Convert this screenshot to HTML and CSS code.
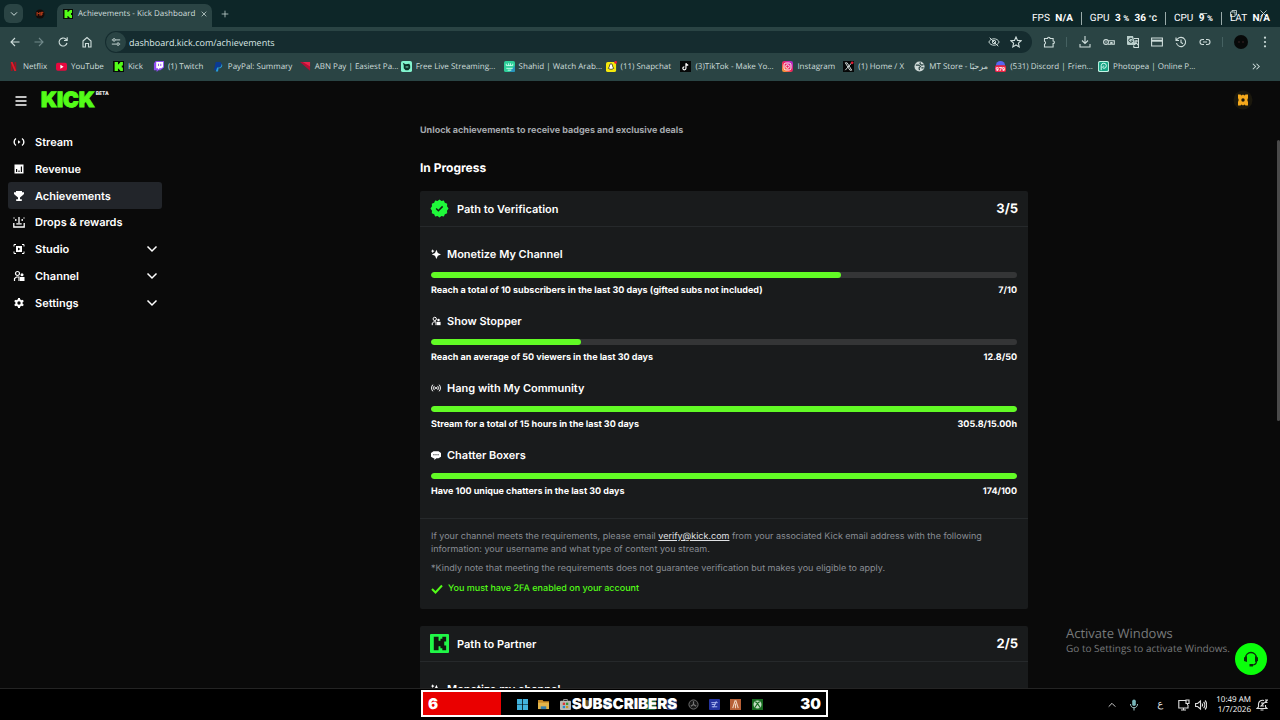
FILE: index.html
```html
<!DOCTYPE html>
<html lang="en">
<head>
<meta charset="utf-8">
<title>Achievements - Kick Dashboard</title>
<link rel="stylesheet" href="styles.css">
</head>
<body>
<svg class="defs" aria-hidden="true">
  <symbol id="kick" viewBox="0 0 20 20"><rect width="20" height="20" fill="#080b08"/><path fill="#53fc18" d="M3 2h6v4h2V4h2V2h5v6h-2v4h2v6h-5v-2h-2v-2H9v4H3z"/></symbol>
  <symbol id="chev" viewBox="0 0 12 12"><path d="M1.500 3.500 6 8l4.500-4.500" fill="none" stroke="currentColor" stroke-width="1.500"/></symbol>
  <symbol id="users" viewBox="0 0 12 12"><circle cx="4.500" cy="3.500" r="2" fill="none" stroke="currentColor" stroke-width="1.200"/><path d="M1.500 11V8.500L3.500 7H6v4" fill="none" stroke="currentColor" stroke-width="1.200"/><circle cx="9" cy="4.700" r="1.500" fill="currentColor"/><path d="M7 7h4.500v4H7z" fill="currentColor"/></symbol>
  <symbol id="spark" viewBox="0 0 12 12"><path fill="currentColor" d="M6.500 1 8.200 4.800 12 6.500 8.200 8.200 6.500 12 4.800 8.200 1 6.500l3.800-1.700zM2 .2l.8 1.500 1.500.8-1.500.8L2 4.800l-.8-1.500L0 2.500l1.200-.8z"/></symbol>
</svg>

<header class="browser">
  <div class="tabs">
    <button class="tab-search" aria-label="Search tabs"><svg viewBox="0 0 12 12"><use href="#chev"/></svg></button>
    <span class="pinned"><svg viewBox="0 0 12 12"><circle cx="6" cy="6" r="5.500" fill="#160b08"/><path d="M2.500 8V4l2 2 1.500-2v4M7.500 8V4H10M7.500 6h2" fill="none" stroke="#c4421c" stroke-width="1.200"/></svg></span>
    <div class="tab"><svg><use href="#kick"/></svg><span>Achievements - Kick Dashboard</span>
      <button aria-label="Close tab"><svg viewBox="0 0 12 12"><path class="ln" d="m2.500 2.500 7 7m0-7-7 7"/></svg></button></div>
    <button class="newtab" aria-label="New tab"><svg viewBox="0 0 12 12"><path class="ln" d="M6 1v10M1 6h10"/></svg></button>
    <div class="winctl" aria-hidden="true"><svg viewBox="0 0 12 12"><path class="ln" d="M1 6h10"/></svg><svg viewBox="0 0 12 12"><path class="ln" d="M2 4h6v6H2zM4 4V2h6v6H8"/></svg><svg viewBox="0 0 12 12"><path class="ln" d="m2 2 8 8m0-8-8 8"/></svg></div>
  </div>
  <div class="stats"><span>FPS <b>N/A</b></span><span>GPU <b>3 <small>%</small></b> <b>36 <small>°C</small></b></span><span>CPU <b>9 <small>%</small></b></span><span>LAT <b>N/A</b></span></div>

  <div class="toolbar">
    <button aria-label="Back"><svg viewBox="0 0 12 12"><path class="ln" d="M10.500 6H2m4-4L2 6l4 4"/></svg></button>
    <button class="dim" aria-label="Forward"><svg viewBox="0 0 12 12"><path class="ln" d="M1.500 6H10M6 2l4 4-4 4"/></svg></button>
    <button aria-label="Reload"><svg viewBox="0 0 12 12"><path class="ln" d="M10 7A4 4 0 1 1 8.700 3l1.300 1.300M10.200 1.300v3.200H7"/></svg></button>
    <button aria-label="Home"><svg viewBox="0 0 12 12"><path class="ln" d="M2 5 6 1.500 10 5v6H7.500V7.500h-3V11H2z"/></svg></button>
    <div class="address">
      <button class="site" aria-label="Site information"><svg viewBox="0 0 12 12"><path class="ln" d="M1 3.500h1M5.500 3.500H11M1 8.500h5.500M10.500 8.500h.5"/><circle class="ln" cx="3.700" cy="3.500" r="1.500"/><circle class="ln" cx="8.500" cy="8.500" r="1.500"/></svg></button>
      <input type="text" value="dashboard.kick.com/achievements" aria-label="Address">
      <button aria-label="Tracking blocked"><svg viewBox="0 0 14 12"><path class="ln" d="M1 6c2-5 10-5 12 0-2 5-10 5-12 0zM2 1l10 10"/><circle class="ln" cx="7" cy="6" r="2"/></svg></button>
      <button aria-label="Bookmark"><svg viewBox="0 0 12 12"><path class="ln" d="m6 1 1.500 3.400 3.700.3-2.800 2.500.8 3.700L6 9l-3.200 1.900.8-3.700L.8 4.700l3.700-.3z"/></svg></button>
    </div>
    <button aria-label="Extensions"><svg viewBox="0 0 12 12"><path class="ln" d="M1.500 2.500h3a1.300 1.300 0 0 1 2.600 0h3V5a1.300 1.300 0 0 1 0 2.600V11h-8.600V8.300a1.600 1.600 0 0 0 0-3z"/></svg></button>
    <i></i>
    <button aria-label="Downloads"><svg viewBox="0 0 12 12"><path class="ln" d="M6 0v7M3 4.500l3 3 3-3M1 8v3h10V8"/></svg></button>
    <button aria-label="Passwords"><svg viewBox="0 0 12 12"><circle class="ln" cx="3" cy="6" r="2.400"/><circle cx="3" cy="6" r=".8" fill="currentColor"/><path class="ln" d="M5.300 4.700h6v3.500H9V6.500H7.800v1.700H5"/></svg></button>
    <button aria-label="Translate"><svg viewBox="0 0 12 12"><path fill="#b9cecb" d="M0 0h6l2.500 9H1a1 1 0 0 1-1-1z"/><path d="M5.500 3.200A2 2 0 1 0 5.700 5H4" fill="none" stroke="#2a4444"/><path class="ln" d="M7 2.500h4.500v9H7l-.5-2M7.500 5h3.500M9.200 4v1c0 2-1 3-2 3.700M8.500 6l2.500 3"/></svg></button>
    <button aria-label="Payment"><svg viewBox="0 0 12 12"><path class="ln" d="M.6 2h10.800v8H.6z"/><path d="M.6 3.700h10.800v2H.6z" fill="currentColor"/></svg></button>
    <button aria-label="History"><svg viewBox="0 0 12 12"><path class="ln" d="M1.500 7a4.600 4.600 0 1 0 1-4L1 4.500M1 1.500v3h3M6 3.500v3l2 1.300"/></svg></button>
    <button aria-label="Copy link"><svg viewBox="0 0 12 12"><path class="ln" d="M5 3.500H3.500a2.500 2.500 0 0 0 0 5H5M7 3.500h1.500a2.500 2.500 0 0 1 0 5H7M4 6h4"/></svg></button>
    <i></i>
    <button aria-label="Profile"><svg class="big" viewBox="0 0 14 14"><circle cx="7" cy="7" r="7" fill="#070909"/><path d="M4 7h2m2 0h2" stroke="#3b2426"/></svg></button>
    <button aria-label="Menu"><svg viewBox="0 0 12 12" fill="currentColor"><circle cx="6" cy="1.700" r="1.100"/><circle cx="6" cy="6" r="1.100"/><circle cx="6" cy="10.300" r="1.100"/></svg></button>
  </div>

  <nav class="bookmarks" aria-label="Bookmarks">
    <a href="#"><svg viewBox="0 0 12 12"><path fill="#9d1420" d="M3 1h2l2 5V1h2v10H7L5 6v5H3z"/><path fill="#e01b2b" d="M3 1h2l4 10H7z"/></svg>Netflix</a>
    <a href="#"><svg viewBox="0 0 12 12"><rect y="2" width="12" height="8.500" rx="2" fill="#e8083e"/><path fill="#fff" d="m4.800 4 3.500 2.200-3.500 2.200z"/></svg>YouTube</a>
    <a href="#"><svg><use href="#kick"/></svg>Kick</a>
    <a href="#"><svg viewBox="0 0 12 12"><path fill="#8e4df0" d="M1 2.500 3 0h9v7l-4 3H6l-2 2v-2H1z"/><path fill="#fff" d="M3.500 1H11v5.500L9 8H7L5.500 9.500V8h-2z"/><path d="M6 3v2.500M8.500 3v2.500" stroke="#8e4df0"/></svg>(1) Twitch</a>
    <a href="#"><svg viewBox="0 0 12 12"><path fill="#0a3a94" d="M3 1h4.500C10 1 10 6 6.500 6.500H5L4 10H1z"/><path fill="#259be0" d="M9.500 3c1.500 2 0 5-2.500 5H6l-.5 3.500H3L4.500 7H7c1.500-.5 2.500-2 2.500-4z"/></svg>PayPal: Summary</a>
    <a href="#"><svg viewBox="0 0 12 12"><path fill="#b30f35" d="M0 1h11v9.500z"/><path fill="#e5234b" d="m3 1 8 5V1z"/></svg>ABN Pay | Easiest Pa...</a>
    <a href="#"><svg viewBox="0 0 12 12"><rect width="12" height="12" rx="2" fill="#82f4ce"/><path fill="#0c3329" d="m2 2 3 1.500 4-.5 1 2v3L8 10H5L3 8V5z"/><path fill="#82f4ce" d="M5 6h3v1H5z"/></svg>Free Live Streaming...</a>
    <a href="#"><svg viewBox="0 0 12 12"><rect width="12" height="12" rx="2" fill="#2dce99"/><path fill="#2793bd" d="M6 12h4a2 2 0 0 0 2-2V5z"/><path d="M2.500 3v2h7V3M5 2.500V5m2-2.500V5M2.500 8h7M4 10h4" stroke="#c9fff0" fill="none"/></svg>Shahid | Watch Arab...</a>
    <a href="#"><svg viewBox="0 0 12 12"><rect y="1" width="11" height="11" rx="2" fill="#f5e90c"/><path d="M5.500 3C3.500 3 4 5.500 3.500 6.500L2.500 8l2 1h2l2-1-1-1.500C7 5.500 7.500 3 5.500 3z" fill="#fff" stroke="#26260c" stroke-width=".8"/><circle cx="10.500" cy="1.500" r="1.500" fill="#ee1d37"/></svg>(11) Snapchat</a>
    <a href="#"><svg viewBox="0 0 12 12"><rect width="12" height="12" fill="#060808"/><path d="M6.500 2.500V8a1.700 1.700 0 1 1-1.700-1.700M6.500 2.500C7 4 8 4.500 9 4.500" stroke="#fff" stroke-width="1.300" fill="none"/></svg>(3)TikTok - Make Yo...</a>
    <a href="#"><svg viewBox="0 0 12 12"><defs><linearGradient id="ig" x1="0" y1="1" x2="1" y2="0"><stop stop-color="#ffb52c"/><stop offset=".5" stop-color="#f0205f"/><stop offset="1" stop-color="#a42be8"/></linearGradient></defs><rect width="12" height="12" rx="2.500" fill="url(#ig)"/><rect x="2.200" y="2.200" width="7.600" height="7.600" rx="2" fill="none" stroke="#fff"/><circle cx="6" cy="6" r="1.900" fill="none" stroke="#fff"/></svg>Instagram</a>
    <a href="#"><svg viewBox="0 0 12 12"><rect width="12" height="12" fill="#060808"/><path d="m2.500 2 5 8h2l-5-8zM9.500 2l-7 8" fill="none" stroke="#dce4e2"/><circle cx="10" cy="2" r="1.500" fill="#d81b32"/></svg>(1) Home / X</a>
    <a href="#"><svg viewBox="0 0 12 12"><circle cx="6" cy="6" r="5.500" fill="#cfdad8"/><path d="M2 4.500h3L7 6 5.500 7.500 6 10M7 1.500 6.500 3 8.500 4.500l2-.5M8 7.500h2.500" stroke="#2a4444" stroke-width="1.300" fill="none"/></svg>MT Store - مرحبًا</a>
    <a href="#"><svg viewBox="0 0 12 12"><path fill="#5865f2" d="M1 5a5 5 0 0 1 10 0z"/><rect y="4.500" width="12" height="7.500" rx="2" fill="#ed2345"/><text x="6" y="10.500" class="badge">979</text></svg>(531) Discord | Frien...</a>
    <a href="#"><svg viewBox="0 0 12 12"><rect width="12" height="12" rx="2" fill="#c4f5e6"/><rect x="1" y="1" width="10" height="10" rx="1.500" fill="#18a385"/><path d="M3.500 10V5a2.800 2.800 0 1 1 3 3C4.500 8 5 5 6.800 5.500" fill="none" stroke="#e6fff8"/></svg>Photopea | Online P...</a>
    <button aria-label="More bookmarks"><svg viewBox="0 0 12 12"><path class="ln" d="m2 3 3 3-3 3m4-6 3 3-3 3"/></svg></button>
  </nav>
</header>

<div class="app">
  <aside>
    <div class="brand">
      <button aria-label="Toggle menu"><svg viewBox="0 0 12 12"><path d="M.5 2h11M.5 6h11M.5 10h11" stroke="#fff" stroke-width="1.300"/></svg></button>
      <span class="logo">KICK</span><sup>BETA</sup>
    </div>
    <nav class="side" aria-label="Dashboard">
      <a href="#"><svg viewBox="0 0 12 12"><path d="M3 2.500C.5 4 .5 8 3 9.500M9 2.500c2.500 1.500 2.500 5.500 0 7" fill="none" stroke="currentColor" stroke-width="1.400"/><path d="m5 4.300 2.500 1.700L5 7.700z" fill="currentColor"/></svg>Stream</a>
      <a href="#"><svg viewBox="0 0 12 12"><path fill="currentColor" fill-rule="evenodd" d="M1.500 1.500h9v9h-9zM3 6v3h1.200V6zm2.400 1.500V9h1.200V7.500zM7.800 3.500V9H9V3.500z"/></svg>Revenue</a>
      <a href="#" class="active"><svg viewBox="0 0 12 12"><path fill="currentColor" d="M3 1h6v1.200h2V4L9.400 5.600 7 7.500v1.700h1.800V11H3.200V9.200H5V7.500L2.600 5.600 1 4V2.200h2z"/></svg>Achievements</a>
      <a href="#"><svg viewBox="0 0 12 12"><path d="M.8 7v4h10.400V7M3.300 7.800h5.400M6 1v6M2.800 3v2M9.200 3v2M1 1.500v1M11 1.500v1" fill="none" stroke="currentColor" stroke-width="1.300"/></svg>Drops &amp; rewards</a>
      <a href="#"><svg viewBox="0 0 12 12"><path fill="currentColor" fill-rule="evenodd" d="M3 3h6v6H3zM5 4.500v3L7.500 6z"/><path d="M1 3.500V1.500h2M9 1.500h2v2M1 8.500v2h2M9 10.500h2v-2" fill="none" stroke="currentColor"/></svg>Studio<svg class="arrow"><use href="#chev"/></svg></a>
      <a href="#"><svg><use href="#users"/></svg>Channel<svg class="arrow"><use href="#chev"/></svg></a>
      <a href="#"><svg viewBox="0 0 12 12"><circle cx="6" cy="6" r="2.700" fill="none" stroke="currentColor" stroke-width="2"/><path d="M6 1v2M6 9v2M1.700 3.500l1.500 1M8.800 7.500l1.500 1M1.700 8.500l1.500-1M8.800 4.500l1.500-1" stroke="currentColor" stroke-width="2"/></svg>Settings<svg class="arrow"><use href="#chev"/></svg></a>
    </nav>
  </aside>

  <main>
    <p class="lead">Unlock achievements to receive badges and exclusive deals</p>
    <h1>In Progress</h1>
    <section class="card">
      <div class="head"><svg viewBox="0 0 20 20"><path d="m10 .5 2 1.700 2.600-.6 1 2.400 2.500.9-.2 2.700L19.500 10l-1.600 2.300.2 2.700-2.500 1-1 2.400-2.600-.6-2 1.700-2-1.700-2.600.6-1-2.400-2.500-1 .2-2.700L.5 10l1.600-2.400-.2-2.700 2.500-.9 1-2.400 2.600.6z" fill="#1ff93a"/><path d="m6.500 10 2.300 2.300 4.500-4.500" fill="none" stroke="#122014" stroke-width="1.600"/></svg><h2>Path to Verification</h2><strong>3/5</strong></div>
      <div class="goals">
        <article><h3><svg><use href="#spark"/></svg>Monetize My Channel</h3><div class="bar"><span style="width:70%"></span></div><p><span>Reach a total of 10 subscribers in the last 30 days (gifted subs not included)</span><span>7/10</span></p></article>
        <article><h3><svg><use href="#users"/></svg>Show Stopper</h3><div class="bar"><span style="width:25.6%"></span></div><p><span>Reach an average of 50 viewers in the last 30 days</span><span>12.8/50</span></p></article>
        <article><h3><svg viewBox="0 0 12 12"><path d="M2.200 2c-2 2-2 6 0 8M9.800 2c2 2 2 6 0 8M4 3.500c-1 1.500-1 3.500 0 5M8 3.500c1 1.500 1 3.500 0 5" fill="none" stroke="currentColor" stroke-width="1.200"/><circle cx="6" cy="6" r="1.200" fill="currentColor"/></svg>Hang with My Community</h3><div class="bar"><span style="width:100%"></span></div><p><span>Stream for a total of 15 hours in the last 30 days</span><span>305.8/15.00h</span></p></article>
        <article><h3><svg viewBox="0 0 12 12"><path fill="currentColor" d="M3 1.500h6l3 2v4.500L9 10H6.500L4 12v-2H3L0 8V3.500z"/><path d="M2.800 5.700h1.400m1.100 0h1.400m1.100 0h1.400" stroke="#191b1c" stroke-width="1.200"/></svg>Chatter Boxers</h3><div class="bar"><span style="width:100%"></span></div><p><span>Have 100 unique chatters in the last 30 days</span><span>174/100</span></p></article>
      </div>
      <div class="notes">
        <p>If your channel meets the requirements, please email <a href="#">verify@kick.com</a> from your associated Kick email address with the following information: your username and what type of content you stream.</p>
        <p>*Kindly note that meeting the requirements does not guarantee verification but makes you eligible to apply.</p>
        <p class="ok"><svg viewBox="0 0 12 12"><path d="m1 6 3.500 3.500 6.500-7" fill="none" stroke="currentColor" stroke-width="2"/></svg>You must have 2FA enabled on your account</p>
      </div>
    </section>
    <section class="card">
      <div class="head"><svg viewBox="0 0 20 20"><rect width="20" height="20" rx="1" fill="#20f747"/><path fill="#10180f" d="M4 3h5v4h2V5h2V3h4v5h-2v4h2v5h-4v-2h-2v-2H9v4H4z"/></svg><h2>Path to Partner</h2><strong>2/5</strong></div>
      <div class="goals"><article><h3><svg><use href="#spark"/></svg>Monetize my channel</h3></article></div>
    </section>
  </main>
  <button class="account" aria-label="Account"><svg viewBox="0 0 20 20"><circle cx="10" cy="10" r="9.500" fill="#1b180d"/><path d="M5 4.500h2.500L8.500 5.500 10 4.500l1.500 1 1-1H15V8l-.7 2 .7 2v3.500h-2.500l-1-1-1.500 1-1.500-1-1 1H5V12l.7-2L5 8z" fill="#f5a91c"/><circle cx="10" cy="10" r="1.700" fill="#1b180d"/></svg></button>
  <div class="thumb"></div>
  <div class="activate"><b>Activate Windows</b>Go to Settings to activate Windows.</div>
  <button class="help" aria-label="Support"><svg viewBox="0 0 16 16"><path d="M2.500 8.500V7a5.500 5.500 0 0 1 11 0v3c0 2.500-2 4-4.500 4" fill="none" stroke="#0a2a0a" stroke-width="1.300"/><path fill="#0a2a0a" d="M1 6.500 4 5v6l-3-1zM15 6.500 12 5v6l3-1zM6.500 13H10v2.500H6.500z"/></svg></button>
</div>

<footer class="taskbar">
  <div class="pins">
    <svg viewBox="0 0 12 12" fill="#42b4df"><path d="M0 0h5.600v5.600H0zM6.400 0H12v5.600H6.400zM0 6.400h5.600V12H0zM6.400 6.400H12V12H6.400z"/></svg>
    <svg viewBox="0 0 12 12"><path d="M0 1h5l1 1.500h6V11H0z" fill="#c98b26"/><path d="M0 4h12v7H0z" fill="#e4b54b"/><path d="M3 8h6v3H3z" fill="#367fae"/></svg>
    <svg viewBox="0 0 12 12"><path d="M4 2V.5h4V2" fill="none" stroke="#aaa"/><rect y="2" width="12" height="10" rx="1" fill="#b9b9b4"/><path d="M3 4h2.500v2.500H3z" fill="#d33"/><path d="M6.500 4H9v2.500H6.500z" fill="#393"/><path d="M3 7.500h2.500V10H3z" fill="#28c"/><path d="M6.500 7.500H9V10H6.500z" fill="#c92"/></svg>
    <svg viewBox="0 0 12 12"><circle cx="6" cy="6" r="5" fill="#665124"/></svg>
    <svg viewBox="0 0 12 12"><circle cx="6" cy="6" r="5" fill="#244466"/></svg>
    <svg viewBox="0 0 12 12"><circle cx="6" cy="6" r="5" fill="#333"/></svg>
    <svg viewBox="0 0 12 12"><rect width="12" height="12" rx="2" fill="#1d5e31"/></svg>
    <svg viewBox="0 0 12 12"><rect width="12" height="12" rx="2" fill="#222f66"/></svg>
    <svg viewBox="0 0 12 12"><circle cx="6" cy="6" r="5" fill="#181818" stroke="#777"/><path d="M6 6V2.500M6 6 3 8M6 6l3 2" stroke="#777" stroke-width="1.300"/></svg>
    <svg viewBox="0 0 12 12"><rect width="12" height="12" rx="1" fill="#2433a0"/><path d="M2.500 4h7M3 6h4M3 8.500h6M8 2.500 5 9" stroke="#b4c1f5"/></svg>
    <svg viewBox="0 0 12 12"><rect width="12" height="12" fill="#b75f36"/><path d="m3 10 2.500-8h1L9 10M6 5v5" stroke="#f1d4bf" stroke-width="1.200" fill="none"/></svg>
    <svg viewBox="0 0 12 12"><rect width="12" height="12" fill="#176a20"/><circle cx="6" cy="6" r="4.300" fill="#c2dfc1"/><path d="M3 3c2 0 3 2 3 2s1-2 3-2M3 9.500 6 5l3 4.500" stroke="#176a20" stroke-width="1.200" fill="none"/></svg>
  </div>
  <div class="tray">
    <svg class="t1" viewBox="0 0 12 12"><path class="ln" d="m2 8 4-4 4 4"/></svg>
    <svg class="mic" viewBox="0 0 12 12"><rect x="4.200" y=".5" width="3.600" height="6.500" rx="1.800" fill="#79b7ba"/><path d="M2.500 5c0 5 7 5 7 0M6 9v2.500" fill="none" stroke="#a6c9ca"/></svg>
    <span class="lang">ع</span>
    <svg viewBox="0 0 12 12"><path class="ln" d="M8 1.500H.8v7.500H10V6M3 11h5M5.500 9v2"/><path class="ln" d="M8 1h3v3.500H8zM9.500 4.500V6"/></svg>
    <svg viewBox="0 0 12 12"><path class="ln" d="M.6 4.500h2L5.500 2v8L2.600 7.500h-2zM7 4.500c.8 1 .8 2 0 3M8.600 3c1.700 1.500 1.700 4.500 0 6M10 1.500c2.300 2 2.300 7 0 9"/></svg>
    <time>10:49 AM<br>1/7/2026</time>
    <svg viewBox="0 0 12 12"><path class="ln" d="M8 1.500C5 .5 2.500 2.500 2.500 5v3L1 9.500h10L9.500 8V6M4.500 11h3M5 4h3L5 7h3M9 1h2.500L9 3.500h2.500"/></svg>
  </div>
  <div class="subs"><span class="count">6</span><b>SUBSCRIBERS</b><span class="goal">30</span></div>
</footer>
</body>
</html>
```
FILE: styles.css
```css
* { box-sizing: border-box; margin: 0; padding: 0; }
body { height: 100vh; display: flex; flex-direction: column; overflow: hidden; background: #0a0a0a; color: #fff; font-family: Inter, "Liberation Sans", sans-serif; font-size: 9px; text-rendering: geometricPrecision; }
button { background: none; border: 0; color: inherit; font: inherit; display: grid; place-items: center; }
a { color: inherit; text-decoration: none; }
svg { width: 12px; height: 12px; flex: none; display: block; }
.defs { position: absolute; width: 0; height: 0; }
.ln { fill: none; stroke: currentColor; stroke-width: 1.1; }

.browser { flex: none; position: relative; background: #2a4444; color: #cfdedc; font-family: "Open Sans", "Noto Sans", sans-serif; }
.tabs { height: 27px; background: #0d2628; display: flex; align-items: center; padding-left: 4px; }
.tab-search { width: 19px; height: 19px; border-radius: 6px; background: #2a4444; }
.tab-search svg { width: 8px; height: 8px; }
.pinned { width: 34px; display: grid; place-items: center; }
.pinned svg { width: 10px; height: 10px; }
.tab { width: 155px; height: 23px; align-self: flex-end; display: flex; align-items: center; gap: 5px; padding: 0 6px; border-radius: 7px 7px 0 0; background: #2a4444; font-size: 8px; line-height: 12px; padding-bottom: 4px; white-space: nowrap; }
.tab > svg { width: 10px; height: 10px; }
.tab span { flex: 1; }
.tab button svg { width: 8px; height: 8px; }
.newtab { width: 26px; height: 20px; }
.newtab svg { width: 8px; height: 8px; }
.winctl { margin-left: auto; display: flex; gap: 21px; padding: 0 12px 0 0; }
.winctl svg { width: 9px; height: 9px; }
.stats { position: absolute; top: 12px; right: 10px; display: flex; font: 10px/13px Roboto, sans-serif; color: #fff; white-space: nowrap; }
.stats span + span { border-left: 1px solid #9aabaa; margin-left: 8px; padding-left: 8px; }
.stats b { margin-left: 3px; }
.stats small { font-size: 8px; }

.toolbar { height: 30px; display: flex; align-items: center; padding: 0 3px; }
.toolbar > button { width: 24px; height: 24px; flex: none; }
.toolbar .dim { color: #71898a; }
.toolbar .big { width: 14px; height: 14px; }
.toolbar > i { width: 1px; height: 10px; margin: 0 6px 0 5px; background: #456161; }
.address { flex: 1; height: 22px; margin: 0 5px 0 6px; padding: 0 5px 0 1px; display: flex; align-items: center; border-radius: 11px; background: #152c2f; }
.address button { width: 22px; height: 20px; }
.address .site { width: 20px; border-radius: 50%; background: #2a4444; }
.address .site svg { width: 10px; height: 10px; }
.address input { flex: 1; min-width: 0; margin-left: 3px; border: 0; background: none; color: #dbe8e6; font: 9px "Open Sans", sans-serif; text-rendering: geometricPrecision; }

.bookmarks { height: 24px; padding: 0 18px 5px 8px; display: grid; align-items: center; grid-template-columns: minmax(0,48fr) minmax(0,57fr) minmax(0,40fr) minmax(0,60fr) minmax(0,87fr) minmax(0,101fr) minmax(0,103fr) minmax(0,102fr) minmax(0,75fr) minmax(0,102fr) minmax(0,61fr) minmax(0,71fr) minmax(0,81fr) minmax(0,103fr) minmax(0,152fr) 12px; }
.bookmarks a { display: flex; align-items: center; gap: 4px; font-size: 8px; white-space: nowrap; }
.bookmarks svg { width: 11px; height: 11px; }
.badge { font: 700 6px Roboto, sans-serif; fill: #fff; text-anchor: middle; }

.app { flex: 1; min-height: 0; position: relative; display: flex; overflow: hidden; font-weight: 700; }
aside { flex: none; width: 170px; padding: 9px 8px; }
.brand { display: flex; align-items: center; height: 22px; padding-left: 7px; }
.logo { margin-left: 14px; color: #53fc18; font-weight: 900; font-size: 21px; line-height: 22px; -webkit-text-stroke: 1px #53fc18; }
sup { font-size: 5px; line-height: 6px; font-weight: 700; align-self: flex-start; margin: 1px 0 0 1px; }
.side { margin-top: 17px; width: 154px; height: 187px; display: grid; grid-auto-rows: 1fr; font-size: 11px; font-weight: 600; }
.side a { display: flex; align-items: center; gap: 10px; padding: 0 4px 0 5px; border-radius: 3px; }
.side .active { background: #22252a; }
.side .arrow { margin-left: auto; }

main { flex: 1; min-width: 0; display: flex; flex-direction: column; align-items: center; padding: 42px 2px 0 0; }
main > * { width: 100%; max-width: 608px; flex: none; }
.lead { color: #a4a8ad; line-height: 16px; }
h1 { font-size: 12px; font-weight: 700; line-height: 18px; margin: 20px 0 14px; }
.card { background: #191b1c; border-radius: 2px; margin-bottom: 17px; }
.head { height: 36px; display: flex; align-items: center; padding: 0 10px; gap: 8px; border-bottom: 1px solid #26292b; }
.head svg { width: 19px; height: 19px; }
h2 { flex: 1; font-size: 11px; font-weight: 600; }
.head strong { font-size: 13px; font-weight: 700; }
.goals { padding: 19px 11px 18px; display: grid; gap: 14px; }
h3 { display: flex; align-items: center; gap: 6px; font-size: 11px; line-height: 16px; font-weight: 600; }
h3 svg { width: 10px; height: 10px; }
.bar { height: 6px; margin: 10px 0 5px; border-radius: 3px; background: #343536; overflow: hidden; }
.bar span { display: block; height: 100%; border-radius: 3px; background: #62fb25; }
article p { display: flex; justify-content: space-between; line-height: 16px; }
.notes { padding: 11px 11px 12px; border-top: 1px solid #26292b; color: #898e95; font-weight: 400; line-height: 13px; display: grid; gap: 6px; }
.notes a { color: #e0e2e4; text-decoration: underline; }
.notes .ok { display: flex; align-items: center; gap: 5px; color: #53fc18; font-weight: 500; line-height: 16px; }

.account { position: absolute; top: 9px; right: 27px; }
.account svg { width: 20px; height: 20px; }
.thumb { position: absolute; right: 0; top: 59px; width: 3px; height: 281px; border-radius: 2px; background: #4a4a4a; }
.activate { position: absolute; left: 1066px; bottom: 33px; color: #77797a; font: 10px/14px "Open Sans", sans-serif; white-space: nowrap; }
.activate b { display: block; font-size: 13px; line-height: 16px; font-weight: 400; }
.help { position: absolute; right: 13px; bottom: 13px; width: 32px; height: 32px; border-radius: 50%; background: #0aff0a; }
.help svg { width: 16px; height: 16px; }

.taskbar { flex: none; height: 32px; position: relative; display: flex; justify-content: center; background: #000; border-top: 1px solid #242424; }
.pins { width: 256px; display: grid; grid-template-columns: repeat(12, 1fr); place-items: center; }
.pins svg { width: 11px; height: 11px; }
.tray { position: absolute; right: 12px; top: 0; height: 31px; display: flex; align-items: center; gap: 5px; color: #dedede; }
.tray .t1 { width: 10px; height: 10px; }
.tray .mic { margin: 0 12px 0 6px; }
.lang { font: 10px "DejaVu Sans", sans-serif; margin-right: 10px; }
time { text-align: right; font: 8px/10px "Open Sans", sans-serif; color: #fff; margin-left: 4px; }
.subs { position: absolute; left: 421px; top: 1px; width: 407px; height: 27px; border: 2px solid #fff; display: grid; grid-template-columns: 78px 1fr 78px; align-items: center; font-weight: 900; font-size: 15px; }
.subs .count { align-self: stretch; display: flex; align-items: center; padding-left: 5px; background: #ea0000; }
.subs b { font-weight: 900; text-align: center; }
.subs .goal { text-align: right; padding-right: 5px; }
```
